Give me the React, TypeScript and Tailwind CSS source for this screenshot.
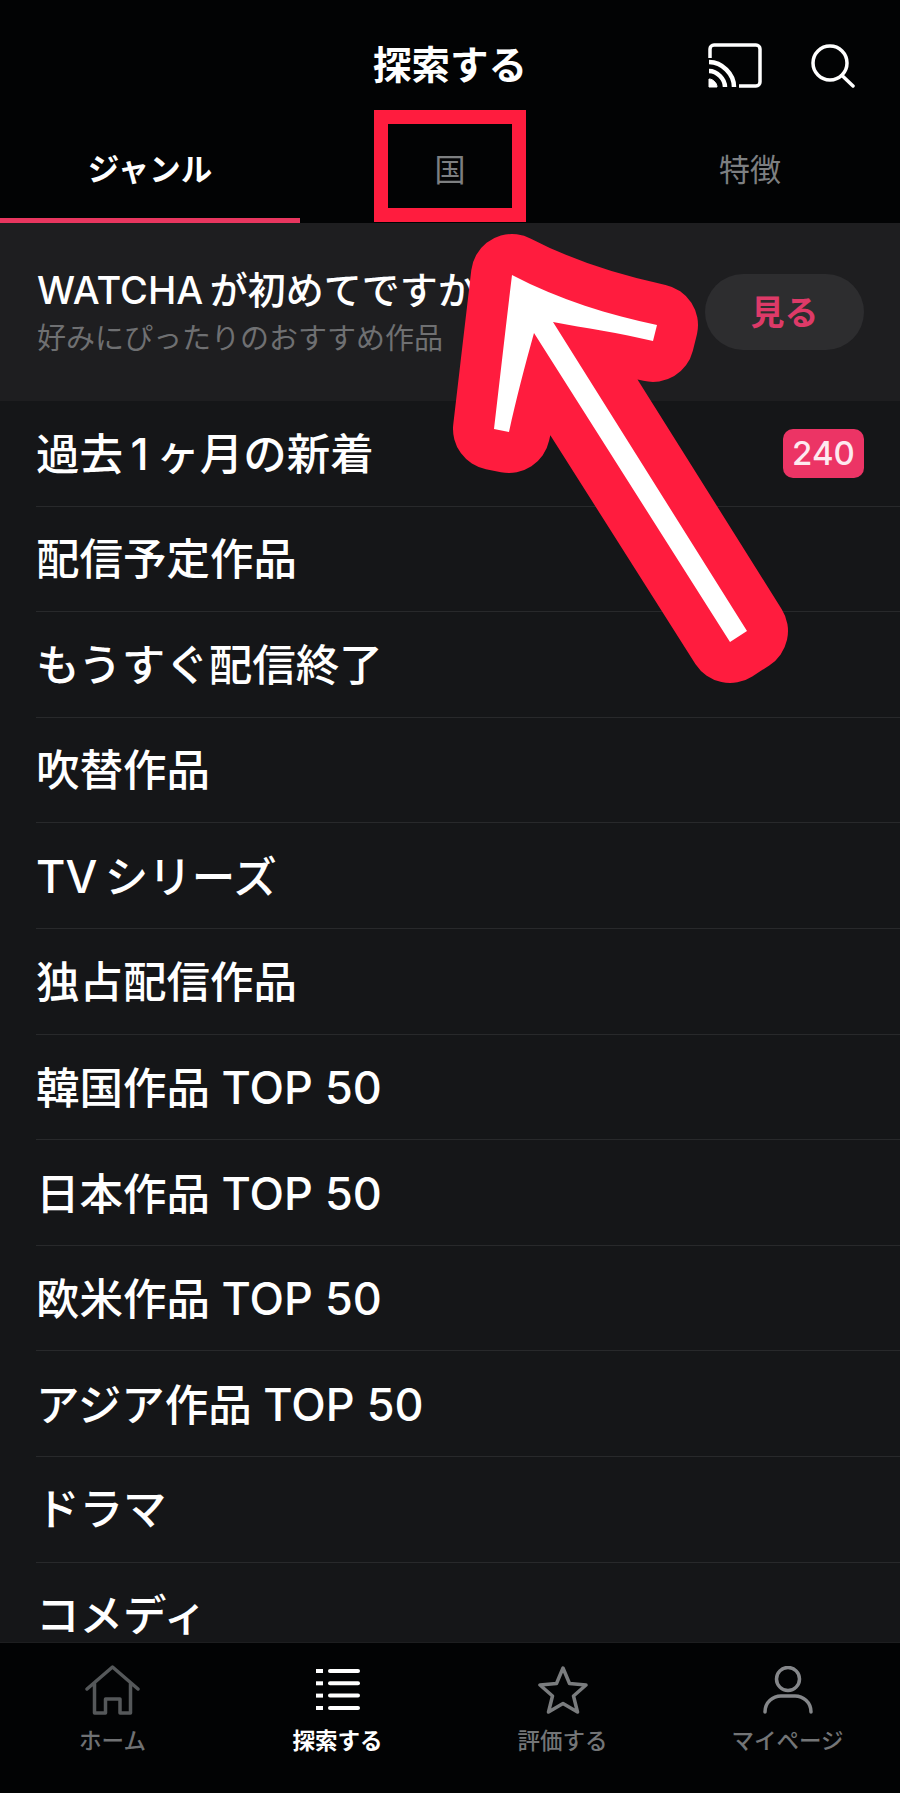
import React from "react";

const rows = ["過去\u20091\u2009ヶ月の新着","配信予定作品","もうすぐ配信終了","吹替作品","TV\u2009シリーズ","独占配信作品","韓国作品 TOP 50","日本作品 TOP 50","欧米作品 TOP 50","アジア作品 TOP 50","ドラマ","コメディ"];

function Home() {
  return <svg width="56" height="52" viewBox="0 0 56 52" fill="none" stroke="#55585a" strokeWidth="3.5" strokeLinejoin="round" strokeLinecap="round"><path d="M2 25 L27.5 3 L53 25 M9.5 19 V49 H20.5 V35 H35 V49 H45.5 V19" /></svg>;
}
function ListIcon() {
  return <svg width="46" height="42" viewBox="0 0 46 42" fill="#fff"><rect x="1" y="0" width="7" height="4"/><rect x="13" y="0" width="32" height="4" rx="2"/><rect x="1" y="12.3" width="7" height="4"/><rect x="13" y="12.3" width="32" height="4" rx="2"/><rect x="1" y="24.6" width="7" height="4"/><rect x="13" y="24.6" width="32" height="4" rx="2"/><rect x="1" y="37" width="7" height="4"/><rect x="13" y="37" width="32" height="4" rx="2"/></svg>;
}
function Star() {
  return <svg width="50" height="48" viewBox="0 0 50 48" fill="none" stroke="#7a7c7e" strokeWidth="3.5" strokeLinejoin="round"><path d="M25 2 L31.5 17.5 L48 19 L35.5 30 L39.5 46 L25 37.5 L10.5 46 L14.5 30 L2 19 L18.5 17.5 Z"/></svg>;
}
function Person() {
  return <svg width="50" height="48" viewBox="0 0 50 48" fill="none" stroke="#85878a" strokeWidth="3.5" strokeLinecap="round"><circle cx="25" cy="13" r="11.5"/><path d="M2 46 C2 36 10 30 18 30 H32 C40 30 48 36 48 46"/></svg>;
}
function Cast() {
  return <svg width="54" height="45" viewBox="0 0 54 45" fill="none" stroke="#fff" strokeWidth="3.5"><path d="M2 15 V6 A4 4 0 0 1 6 2 H48 A4 4 0 0 1 52 6 V39 A4 4 0 0 1 48 43 H31"/><path d="M1 19 C14 19 26 31 26 44" strokeWidth="4.5"/><path d="M1 28 C9 28 17 36 17 44" strokeWidth="4.5"/><path d="M1 36 C5 36 9 40 9 44 H1 Z" fill="#fff" strokeWidth="1"/></svg>;
}
function Search() {
  return <svg width="44" height="45" viewBox="0 0 44 45" fill="none" stroke="#fff" strokeWidth="3.5" strokeLinecap="round"><circle cx="19" cy="20" r="17"/><path d="M31 32.5 L42 43"/></svg>;
}

const ARROW = "M512 275 C560 300 610 315 657 325 L653 341 C620 333 585 328 553 322 L747 631 L730 642 L534 333 C525 365 516 400 509 432 L494 429 C500 378 506 325 512 275 Z";

export default function App() {
  return (
    <div className="relative w-[900px] h-[1793px] overflow-hidden flex flex-col bg-[#151618] text-white font-[Inter,'Noto_Sans_CJK_JP',sans-serif]">
      <header className="bg-[#020304] h-[223px] shrink-0 flex flex-col">
        <div className="relative h-[130px] flex items-center justify-center">
          <h1 className="text-[38.5px] font-bold leading-none">探索する</h1>
          <div className="absolute right-[45px] top-[43px] flex items-start gap-[49px]">
            <Cast />
            <Search />
          </div>
        </div>
        <nav className="flex-1 grid grid-cols-3 text-[31px] -mt-[8px]">
          <div className="flex items-center justify-center font-bold border-b-[5px] border-[#e8365f] text-[31.5px]">ジャンル</div>
          <div className="flex items-center justify-center text-[#7d7f81] pb-[5px]">国</div>
          <div className="flex items-center justify-center text-[#7d7f81] pb-[5px]">特徴</div>
        </nav>
      </header>

      <section className="h-[178px] shrink-0 bg-[#1e1e20] flex items-center justify-between pl-[37px] pr-[36px]">
        <div className="flex flex-col pt-[2px]">
          <div className="text-[38px] font-medium leading-[46px]">WATCHA{"\u2009"}が初めてですか?</div>
          <div className="text-[29px] leading-[40px] text-[#6f7072] mt-[6px]">好みにぴったりのおすすめ作品</div>
        </div>
        <button className="w-[159px] h-[76px] rounded-[38px] bg-[#2d2d2f] text-[#dd3a68] text-[34px] font-bold">見る</button>
      </section>

      <main className="flex-1 overflow-hidden pl-[36px]">
        {rows.map((r, i) => (
          <div key={r} className="h-[105.6px] flex items-center justify-between border-b border-[#28292b] pr-[36px]">
            <span className="text-[43.5px] font-medium leading-none pt-[2px]">
              {r.split(/(TOP 50|TV)/).map((p, k) =>
                p === "TOP 50" || p === "TV" ? <span key={k} className="text-[45px]">{p}</span> : <span key={k}>{p}</span>
              )}
            </span>
            {i === 0 && <span className="w-[81px] h-[49px] rounded-[10px] bg-[#ec3465] text-[#fdeaf0] flex items-center justify-center text-[33px] font-medium">240</span>}
          </div>
        ))}
      </main>

      <footer className="h-[151px] shrink-0 bg-[#020304] grid grid-cols-4 border-t border-[#1d1e20]">
        {[
          { icon: <Home />, label: "ホーム", cls: "text-[#6f7173] font-medium" },
          { icon: <ListIcon />, label: "探索する", cls: "text-white font-bold" },
          { icon: <Star />, label: "評価する", cls: "text-[#737577] font-medium" },
          { icon: <Person />, label: "マイページ", cls: "text-[#737577] font-medium" },
        ].map((t) => (
          <div key={t.label} className="flex flex-col items-center pt-[20px]">
            <div className="h-[54px] flex items-center justify-center">{t.icon}</div>
            <div className={`text-[22.5px] leading-none mt-[13px] ${t.cls}`}>{t.label}</div>
          </div>
        ))}
      </footer>

      <div className="absolute left-[374px] top-[110px] w-[152px] h-[112px] border-[14px] border-[#ff1c3e]" />
      <svg className="absolute left-0 top-0 pointer-events-none" width="900" height="1793" viewBox="0 0 900 1793">
        <path d={ARROW} fill="#ff1c3e" stroke="#ff1c3e" strokeWidth="82" strokeLinejoin="round"/>
        <path d={ARROW} fill="#fff"/>
      </svg>
    </div>
  );
}
